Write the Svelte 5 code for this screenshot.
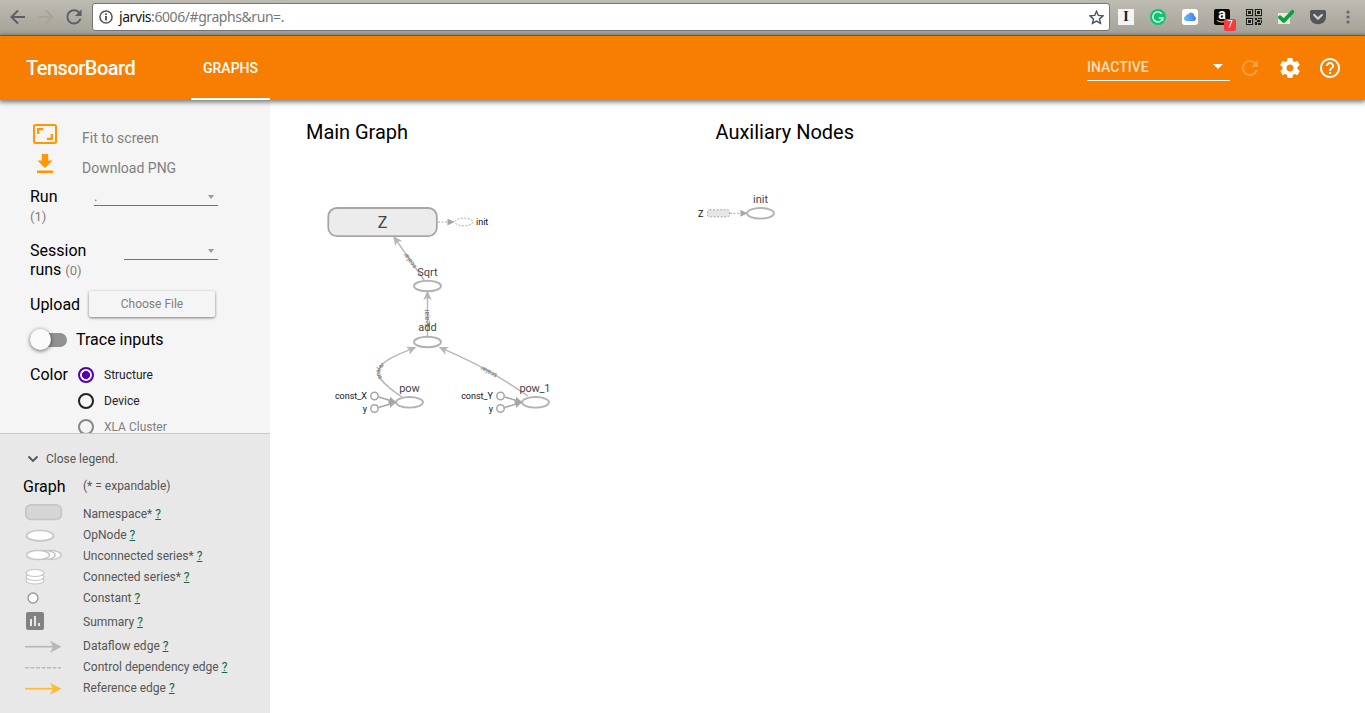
<script>
  const legend = [
    ['namespace', 'Namespace*'],
    ['op', 'OpNode'],
    ['unconnected', 'Unconnected series*'],
    ['connected', 'Connected series*'],
    ['constant', 'Constant'],
    ['summary', 'Summary'],
    ['dataflow', 'Dataflow edge'],
    ['control', 'Control dependency edge'],
    ['reference', 'Reference edge']
  ];
  const colors = ['Structure', 'Device', 'XLA Cluster'];
  let selected = $state('Structure');
  const refreshPath = 'M17.65 6.35C16.2 4.9 14.21 4 12 4c-4.42 0-7.99 3.58-7.99 8s3.57 8 7.99 8c3.73 0 6.84-2.55 7.73-6h-2.08c-.82 2.33-3.04 4-5.65 4-3.31 0-6-2.69-6-6s2.69-6 6-6c1.66 0 3.14.69 4.22 1.78L13 11h7V4l-2.35 2.35z';
</script>

<div class="page">
  <div class="browser">
    <svg class="nav" viewBox="0 0 92 36">
      <g fill="none" stroke="#5d5f66" stroke-width="2"><path d="M25 17H12M18 10.5L11.5 17L18 23.5" /></g>
      <g fill="none" stroke="#a5a59e" stroke-width="2"><path d="M39 17H52M46 10.5L52.5 17L46 23.5" /></g>
      <path fill="#5d5f66" transform="translate(62.8 5.6) scale(.94)" d={refreshPath} />
    </svg>
    <div class="address">
      <svg class="info" viewBox="0 0 14 14"><circle cx="7" cy="7" r="6.1" fill="none" stroke="#555" stroke-width="1.5" /><path d="M7 6v4.5M7 3.3v1.7" stroke="#444" stroke-width="1.7" /></svg>
      <span class="url"><b>jarvis</b>:6006/#graphs&amp;run=.</span>
      <svg class="star" viewBox="0 0 14 14"><path d="M7 1.2l1.7 3.9 4.3.4-3.2 2.8.95 4.2L7 10.3l-3.75 2.2.95-4.2L1 5.500l4.300-.4z" fill="none" stroke="#4c4e55" stroke-width="1.3" /></svg>
    </div>
    <div class="extensions">
      <span class="insta">I</span>
      <svg viewBox="0 0 16 16"><circle cx="8" cy="8" r="8" fill="#0fc46e" /><path d="M11.7 4.700A5 5 0 1 0 12.800 8.700H8.800M12.800 8.700v3" fill="none" stroke="#e2fff0" stroke-width="1.4" /></svg>
      <svg viewBox="0 0 16 16"><defs><linearGradient id="cloud"><stop offset="0" stop-color="#68c4fb" /><stop offset="1" stop-color="#4776ed" /></linearGradient></defs><rect width="16" height="16" rx="3" fill="#fff" /><path d="M4 12a2.500 2.500 0 0 1-.3-4.900 2.200 2.200 0 0 1 2.500-1.800 3.300 3.300 0 0 1 6.200 1.800A2.600 2.600 0 0 1 12 12z" fill="url(#cloud)" /></svg>
      <span class="amazon">a<svg viewBox="0 0 16 16"><path d="M3 11.500q5 3 10 0" fill="none" stroke="#f5a21b" stroke-width="1.3" /></svg><i>7</i></span>
      <svg viewBox="0 0 16 16" shape-rendering="crispEdges"><rect width="16" height="16" fill="#9b998f" /><path fill="#1d1d1b" d="M0 0h7v7H0zM9 0h7v7H9zM0 9h7v7H0zM9 9h2v2H9zM12 9h4v1h-4zM11 11h3v2h-3zM15 11h1v3h-1zM9 13h2v3H9zM12 14h3v2h-3z" /><path fill="#b8b6ac" d="M1 1h5v5H1zM10 1h5v5h-5zM1 10h5v5H1z" /><path fill="#1d1d1b" d="M2 2h3v3H2zM11 2h3v3h-3zM2 11h3v3H2z" /></svg>
      <svg viewBox="0 0 16 16"><path d="M0 4h12v11H0z" fill="#eee8d8" /><path d="M2 8.300l3.800 3.600L14.500 2.700" fill="none" stroke="#06a33a" stroke-width="3.800" stroke-linejoin="round" stroke-linecap="round" /></svg>
      <svg viewBox="0 0 16 16"><path d="M0 2.500Q0 1 1.500 1h13Q16 1 16 2.500V8A8 7.300 0 0 1 0 8z" fill="#55555a" /><path d="M4.200 6L8 9.600 11.800 6" fill="none" stroke="#d2d0c9" stroke-width="2.200" stroke-linecap="round" stroke-linejoin="round" /></svg>
      <svg class="dots" viewBox="0 0 4 16"><g fill="#66676c"><circle cx="2" cy="3" r="1.600" /><circle cx="2" cy="8" r="1.600" /><circle cx="2" cy="13" r="1.600" /></g></svg>
    </div>
  </div>

  <header>
    <div class="brand">TensorBoard</div>
    <div class="tab">GRAPHS</div>
    <div class="actions">
      <div class="inactive"><span>INACTIVE</span><i class="caret"></i></div>
      <svg class="dim" viewBox="0 0 24 24"><path d={refreshPath} /></svg>
      <svg viewBox="0 0 24 24"><path d="M19.43 12.98c.04-.32.07-.64.07-.98s-.03-.66-.07-.98l2.110-1.650c.19-.15.24-.42.12-.64l-2-3.460c-.12-.22-.39-.3-.61-.22l-2.490 1c-.52-.4-1.080-.73-1.690-.98l-.38-2.650C14.460 2.180 14.250 2 14 2h-4c-.25 0-.46.18-.49.42l-.38 2.650c-.61.25-1.170.59-1.690.98l-2.490-1c-.23-.09-.49 0-.61.22l-2 3.460c-.13.22-.07.49.12.64l2.110 1.650c-.04.32-.07.65-.07.98s.03.66.07.98l-2.110 1.650c-.19.15-.24.42-.12.64l2 3.460c.12.22.39.3.61.22l2.490-1c.52.4 1.080.73 1.690.98l.38 2.650c.03.24.24.42.49.42h4c.25 0 .46-.18.49-.42l.38-2.650c.61-.25 1.170-.59 1.690-.98l2.490 1c.23.09.49 0 .61-.22l2-3.460c.12-.22.07-.49-.12-.64l-2.110-1.650zM12 15.500c-1.930 0-3.500-1.570-3.500-3.500s1.570-3.500 3.500-3.500 3.500 1.570 3.500 3.500-1.570 3.500-3.500 3.500z" /></svg>
      <svg viewBox="0 0 24 24"><path d="M11 18h2v-2h-2v2zm1-16C6.480 2 2 6.480 2 12s4.480 10 10 10 10-4.480 10-10S17.520 2 12 2zm0 18c-4.410 0-8-3.590-8-8s3.590-8 8-8 8 3.590 8 8-3.590 8-8 8zm0-14c-2.210 0-4 1.790-4 4h2c0-1.100.9-2 2-2s2 .9 2 2c0 2-3 1.750-3 5h2c0-2.250 3-2.500 3-5 0-2.210-1.790-4-4-4z" /></svg>
    </div>
  </header>

  <main>
    <aside>
      <section class="controls">
        <div class="command">
          <svg viewBox="0 0 26 22"><rect x="2" y="2" width="22" height="18" rx="1.500" fill="none" stroke="#ff9800" stroke-width="2" /><path d="M6.200 11V6.200h5M19.800 11v4.800h-5" fill="none" stroke="#ff9800" stroke-width="2.300" /></svg>
          <span>Fit to screen</span>
        </div>
        <div class="command">
          <svg class="download" viewBox="0 0 26 22"><path fill="#ff9800" d="M9.800 1h6.400v6.500h4.300L13 15 5.500 7.500h4.300zM5 17.500h16V20H5z" /></svg>
          <span>Download PNG</span>
        </div>
        <div class="field run">
          <div class="name">Run <small>(1)</small></div>
          <div class="select"><span>.</span><i class="caret"></i></div>
        </div>
        <div class="field session">
          <div class="name">Session runs <small>(0)</small></div>
          <div class="select"><span></span><i class="caret"></i></div>
        </div>
        <div class="upload"><span>Upload</span><button>Choose File</button></div>
        <div class="trace"><div class="toggle"><i></i></div><span>Trace inputs</span></div>
        <div class="color">
          <span>Color</span>
          <div class="radios">
            {#each colors as c, i}
              <button class="radio" class:on={selected === c} class:off={i === 2} onclick={() => (selected = c)}><i></i>{c}</button>
            {/each}
          </div>
        </div>
      </section>

      <section class="legend">
        <div class="close"><svg viewBox="0 0 12 8"><path d="M1.500 1.500L6 6l4.500-4.500" fill="none" stroke="#555" stroke-width="1.900" /></svg>Close legend.</div>
        <div class="title"><span>Graph</span><em>(* = expandable)</em></div>
        {#each legend as [kind, label]}
          <div class="item {kind}">
            <svg viewBox="0 0 40 20" width="40" height="20">
              {#if kind === 'namespace'}
                <rect x="2.800" y="0.900" width="35.500" height="14.500" rx="5" fill="#d6d6d6" stroke="#c6c6c6" stroke-width="1.700" />
              {:else if kind === 'op'}
                <ellipse cx="17" cy="10.700" rx="13.500" ry="5.200" fill="#fff" stroke="#c6c6c6" stroke-width="1.700" />
              {:else if kind === 'unconnected'}
                <g fill="#fff" stroke="#c6c6c6" stroke-width="1.500"><ellipse cx="27.500" cy="9" rx="10.800" ry="4.500" /><ellipse cx="21.500" cy="9" rx="10.800" ry="4.500" /><ellipse cx="15" cy="9" rx="11.500" ry="4.500" /></g>
              {:else if kind === 'connected'}
                <g fill="#fff" stroke="#c6c6c6" stroke-width="1.200"><ellipse cx="12" cy="13.500" rx="9" ry="3.500" /><ellipse cx="12" cy="10" rx="9" ry="3.500" /><ellipse cx="12" cy="6" rx="9" ry="3.500" /></g>
              {:else if kind === 'constant'}
                <circle cx="10" cy="10" r="5" fill="#fff" stroke="#999" stroke-width="1.400" />
              {:else if kind === 'summary'}
                <rect x="3" y="0" width="18" height="18" rx="2" fill="#828282" /><path d="M8 7v7M12 4v10M16 11v3" stroke="#e8e8e8" stroke-width="2" />
              {:else if kind === 'control'}
                <path d="M2 10.700h36" stroke="#bbb" stroke-width="1.600" stroke-dasharray="4 1.500" />
              {:else}
                <g stroke={kind === 'reference' ? '#ffbb33' : '#b8b8b8'} fill={kind === 'reference' ? '#ffbb33' : '#b8b8b8'}><path d="M2 10.700h30" stroke-width="1.700" /><path d="M27 4.700L38.500 10.700L27 16.700L30 10.700z" stroke="none" /></g>
              {/if}
            </svg>
            <span>{label} <u>?</u></span>
          </div>
        {/each}
      </section>
    </aside>

    <div class="graph">
      <svg viewBox="270 100 1095 613" width="1095" height="613">
        <defs>
          <marker id="arrow" viewBox="0 0 10 10" refX="8.500" refY="5" markerWidth="9.500" markerHeight="9.500" markerUnits="userSpaceOnUse" orient="auto"><path d="M0 .5L10 5L0 9.500L2.500 5z" fill="#b7b7b7" /></marker>
          <marker id="solid" viewBox="0 0 8 8" refX="7.500" refY="4" markerWidth="7" markerHeight="7" markerUnits="userSpaceOnUse" orient="auto"><path d="M0 0L8 4L0 8z" fill="#a6a6a6" /></marker>
          <path id="sqrtEdge" d="M424 280L394 237" />
          <path id="addEdge" d="M427.500 336V292" />
          <path id="powEdge" d="M402 397C390 389 377 378 378 372C380 360 400 354 415 347" />
          <path id="powOneEdge" d="M528 396C485 367 470 361 440 347.500" />
        </defs>
        <g class="heading"><text x="306" y="139" textLength="102">Main Graph</text><text x="715.500" y="139" textLength="138.500">Auxiliary Nodes</text></g>
        <g class="edge">
          <path d="M424 280L394 237" marker-end="url(#arrow)" />
          <path d="M427.500 336V292" marker-end="url(#arrow)" />
          <path d="M402 397C390 389 377 378 378 372C380 360 400 354 415 347.500" marker-end="url(#arrow)" />
          <path d="M528 396C485 367 470 361 440 347.500" marker-end="url(#arrow)" />
        </g>
        <g class="tiny">
          <text dy="1.500"><textPath href="#sqrtEdge" startOffset="15">scalar</textPath></text>
          <text dy="2"><textPath href="#addEdge" startOffset="9">scalar</textPath></text>
          <text dy="2"><textPath href="#powEdge" startOffset="28">scalar</textPath></text>
          <text dy="1.500"><textPath href="#powOneEdge" startOffset="37">scalar</textPath></text>
        </g>
        <rect x="328.300" y="208" width="108.500" height="28.200" rx="8.500" fill="#ececec" stroke="#a6a6a6" stroke-width="1.800" />
        <text x="382.500" y="228" class="zed">Z</text>
        <g class="node">
          <ellipse cx="427.500" cy="286" rx="13.500" ry="5.300" /><ellipse cx="427.500" cy="342" rx="13.500" ry="5.300" />
          <ellipse cx="409.500" cy="402.300" rx="13.500" ry="5.300" /><ellipse cx="535.500" cy="402.300" rx="13.500" ry="5.300" />
          <ellipse cx="760.500" cy="213.300" rx="13.500" ry="5.300" />
        </g>
        <g class="const">
          {#each [374.5, 500.5] as x}
            <circle cx={x} cy="396" r="3.700" /><circle cx={x} cy="408.500" r="3.700" />
            <path d="M{x + 4} 397L{x + 21} 402" marker-end="url(#solid)" /><path d="M{x + 4} 407.500L{x + 21} 402.500" marker-end="url(#solid)" />
          {/each}
        </g>
        <g class="dashed">
          <path d="M438 222H454" marker-end="url(#solid)" /><ellipse cx="464" cy="222" rx="9" ry="3.800" />
          <rect x="707.500" y="209.800" width="22" height="7" rx="2" /><path d="M730 213.300H747" marker-end="url(#solid)" />
        </g>
        <g class="label">
          <text x="427.500" y="276">Sqrt</text><text x="427.500" y="331">add</text><text x="409.500" y="392">pow</text><text x="535" y="392" textLength="31">pow_1</text><text x="760.500" y="203">init</text>
        </g>
        <g class="annotation">
          <text x="476" y="225">init</text><text x="698" y="216.500">Z</text>
          <g text-anchor="end"><text x="367" y="399">const_X</text><text x="367" y="412">y</text><text x="493" y="399">const_Y</text><text x="493" y="412">y</text></g>
        </g>
      </svg>
    </div>
  </main>
</div>

<style>
  :global(body) { margin: 0; overflow: hidden; }
  * { box-sizing: border-box; }
  .page { width: 1365px; height: 713px; display: flex; flex-direction: column; font-family: Roboto, sans-serif; background: #fff; }
  svg { display: block; flex: none; }
  .browser { height: 36px; flex: none; display: flex; align-items: flex-start; background: linear-gradient(#bdbbb2, #a5a297); border-bottom: 1px solid #77756d; }
  .nav { width: 92px; height: 36px; }
  .address { width: 1018px; height: 28px; margin-top: 3px; display: flex; align-items: center; padding: 0 5px 0 6px; background: #fff; border: 1px solid #77756e; border-radius: 3px; }
  .info { width: 14px; height: 14px; }
  .url { flex: 1; margin-left: 6px; font: 14px "Noto Sans", sans-serif; letter-spacing: -.43px; color: #777; position: relative; top: -1px; }
  .url b { color: #111; font-weight: 400; }
  .star { width: 15px; height: 15px; }
  .extensions { display: flex; gap: 16px; padding: 9px 0 0 8px; }
  .extensions > svg { width: 16px; height: 16px; }
  .extensions > .dots { width: 4px; margin-left: 4px; }
  .insta { width: 16px; height: 16px; background: #f4f4f4; font: bold 14px/16px "Liberation Serif", serif; text-align: center; color: #222; }
  .amazon { position: relative; width: 16px; height: 16px; background: #080808; border-radius: 2px; color: #fff; font: bold 14px/11px Roboto, sans-serif; text-align: center; }
  .amazon svg { position: absolute; inset: 0; }
  .amazon i { position: absolute; left: 10px; top: 10px; width: 12px; height: 12px; border-radius: 2px; background: #f83b3e; font: 10px/12px Roboto, sans-serif; }
  header { height: 64px; flex: none; display: flex; align-items: stretch; background: #f77e00; color: #fff; box-shadow: 0 1px 5px 1px rgba(0, 0, 0, .55); position: relative; z-index: 2; }
  .brand { width: 191px; padding-left: 26px; font-size: 20px; line-height: 64px; font-weight: 500; letter-spacing: -.5px; }
  .tab { width: 79px; text-align: center; font-size: 14px; font-weight: 500; line-height: 64px; border-bottom: 2px solid #fff; }
  .actions { margin-left: auto; display: flex; align-items: center; gap: 16px; padding-right: 23px; }
  .actions svg { width: 24px; height: 24px; fill: #fff; }
  .actions .dim { opacity: .25; margin-left: -8px; }
  .inactive { display: flex; align-items: center; justify-content: space-between; width: 143px; height: 27px; margin-bottom: 2px; padding-right: 7px; border-bottom: 1px solid #fff; font-size: 14px; font-weight: 500; color: #ffdfbd; }
  .caret { width: 0; height: 0; border: 5px solid transparent; border-top-color: #fff; border-bottom: 0; }
  main { flex: 1; display: flex; min-height: 0; }
  aside { width: 270px; flex: none; display: flex; flex-direction: column; background: #f5f5f5; }
  .controls { height: 333px; flex: none; overflow: hidden; padding: 23px 30px 0; font-size: 16px; line-height: 19px; color: #000; }
  .command { height: 30px; display: flex; font-size: 14px; line-height: 30px; color: #808080; }
  .command svg { width: 26px; height: 22px; margin: 0 24px 0 2px; }
  .field { display: flex; height: 54px; }
  .run { margin-top: 4px; }
  .session { height: 49px; }
  .name { width: 64px; }
  .name small { font-size: 13px; color: #808080; }
  .run .name { width: 34px; margin-right: 30px; }
  .session .name { width: 64px; margin-right: 30px; }
  .select { width: 124px; height: 19px; display: flex; align-items: center; justify-content: space-between; border-bottom: 1px solid #737373; padding: 1px 4px 0 0; font-size: 13px; color: #808080; }
  .session .select { width: 94px; }
  .select .caret { border-width: 4px 3.500px 0; border-top-color: #999; }
  .upload { height: 28px; display: flex; align-items: center; }
  .upload span { width: 59px; }
  .upload button { width: 126px; height: 26px; border: 0; border-radius: 2px; background: #f5f5f5; color: #808080; font: 12px Roboto, sans-serif; box-shadow: 0 1px 3px rgba(0, 0, 0, .5); }
  .trace { height: 20px; margin-top: 11px; display: flex; align-items: center; gap: 9px; }
  .toggle { width: 37px; height: 14px; border-radius: 7px; margin-top: 1px; background: linear-gradient(90deg, transparent 10px, #929292 10px); display: flex; align-items: center; }
  .toggle i { width: 21px; height: 21px; flex: none; border-radius: 50%; background: #fafafa; box-shadow: 0 1px 4px rgba(0, 0, 0, .6); }
  .color { display: flex; margin-top: 15px; }
  .color > span { width: 48px; padding-top: 1px; }
  .radio { display: flex; align-items: center; gap: 10px; height: 26px; padding: 0; border: 0; background: none; font: 12px Roboto, sans-serif; color: #222; }
  .radios { margin-top: -2px; }
  .radio i { width: 16px; height: 16px; border: 2px solid #222; border-radius: 50%; }
  .radio.on i { border-color: #5300b5; background: radial-gradient(circle, #5300b5 0 3.7px, transparent 4.3px); }
  .radio.off { color: #808080; }
  .radio.off i { border-color: #888; }
  .legend { flex: 1; border-top: 1px solid #c8c8c8; background: #e8e8e8; padding: 14px 0 0 23px; font-size: 12px; color: #555; }
  .close { height: 21px; display: flex; align-items: center; }
  .close svg { width: 12px; height: 8px; margin: 0 7px 0 4px; }
  .title { height: 34px; display: flex; align-items: center; }
  .title span { width: 60px; font-size: 16px; color: #000; }
  .title em { font-style: normal; }
  .item { height: 21px; display: flex; align-items: center; gap: 20px; }
  .summary { height: 27px; }
  .item u { color: #116b42; }
  .graph text { font-family: Roboto, sans-serif; }
  .heading { font-size: 20px; fill: #000; }
  .edge { fill: none; stroke: #b7b7b7; stroke-width: 1.400; }
  .tiny { font-size: 6.500px; fill: #666; }
  .zed { font-size: 16px; text-anchor: middle; fill: #444; }
  .node { fill: #fff; stroke: #b3b3b3; stroke-width: 1.900; }
  .const { fill: #fff; stroke: #a6a6a6; stroke-width: 1.500; }
  .dashed { fill: #fff; stroke: #aaa; stroke-width: 1; stroke-dasharray: 2 1.500; }
  .dashed rect { fill: #e6e6e6; }
  .label { font-size: 11px; text-anchor: middle; fill: #444; }
  .annotation { font-size: 9px; fill: #111; }
</style>
